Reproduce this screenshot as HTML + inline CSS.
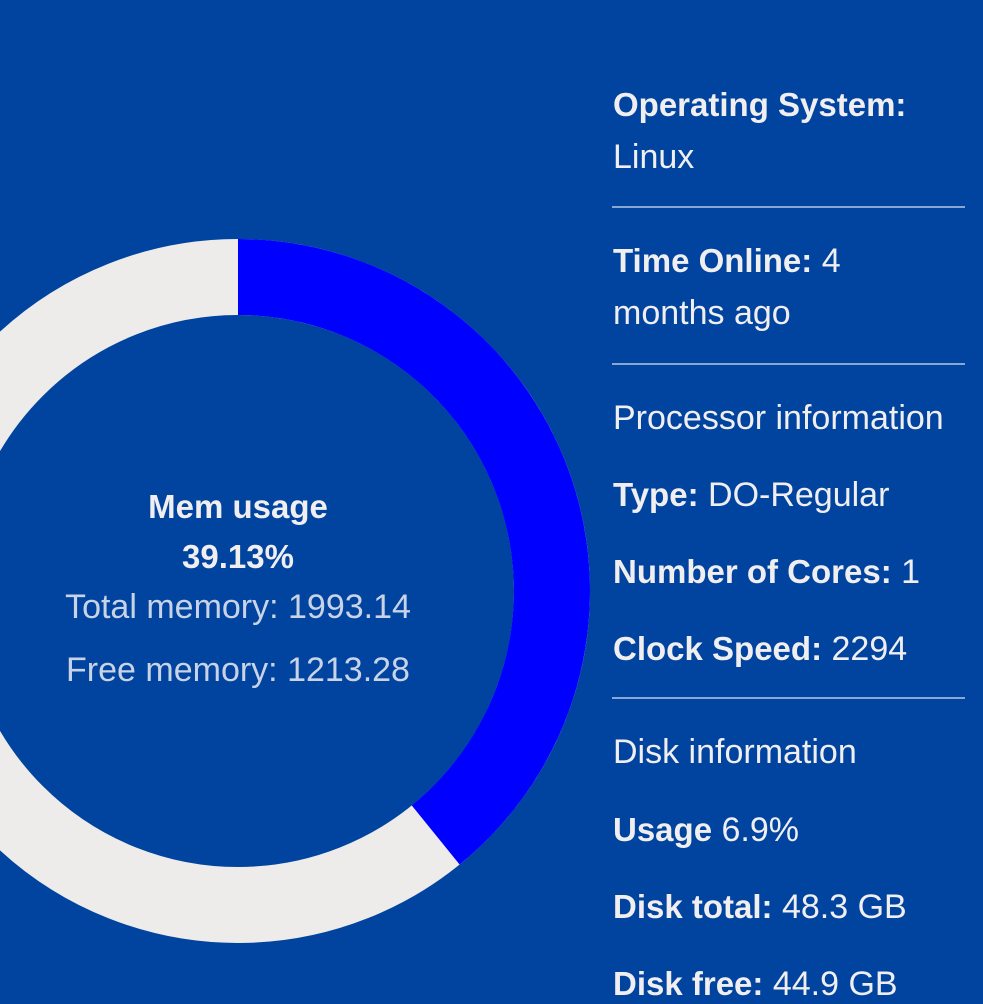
<!DOCTYPE html>
<html><head><style>
html,body{margin:0;padding:0;}
body{width:983px;height:983px;overflow:hidden;background:#0044a0;font-family:"Liberation Sans","DejaVu Sans",sans-serif;color:#f0eeee;position:relative;}
.l{position:absolute;left:613px;font-size:34px;line-height:40px;white-space:nowrap;}
.l b{font-weight:bold;font-size:33px;}
.hr{position:absolute;left:612px;width:353px;height:2px;background:#8aa6d4;}
.c{position:absolute;left:38px;width:400px;text-align:center;font-size:34px;line-height:40px;white-space:nowrap;}
.c b{font-size:33px;}
.dim{color:#c9d3e6;}
</style></head><body>
<svg width="983" height="983" style="position:absolute;left:0;top:0">
<circle cx="238" cy="591" r="314" fill="none" stroke="#eeecea" stroke-width="76"/>
<path d="M238 239 A352 352 0 0 1 459.6 864.5 L411.7 805.4 A276 276 0 0 0 238 315 Z" fill="#0000ff"/>
</svg>
<div class="c" style="top:487px"><b>Mem usage</b></div>
<div class="c" style="top:537px"><b>39.13%</b></div>
<div class="c dim" style="top:587px">Total memory: 1993.14</div>
<div class="c dim" style="top:650px">Free memory: 1213.28</div>

<div class="l" style="top:85px"><b>Operating System:</b></div>
<div class="l" style="top:137px">Linux</div>
<div class="hr" style="top:206px"></div>
<div class="l" style="top:241px"><b>Time Online:</b> 4</div>
<div class="l" style="top:293px">months ago</div>
<div class="hr" style="top:363px"></div>
<div class="l" style="top:398px">Processor information</div>
<div class="l" style="top:475px"><b>Type:</b> DO-Regular</div>
<div class="l" style="top:552px"><b>Number of Cores:</b> 1</div>
<div class="l" style="top:629px"><b>Clock Speed:</b> 2294</div>
<div class="hr" style="top:697px"></div>
<div class="l" style="top:732px">Disk information</div>
<div class="l" style="top:810px"><b>Usage</b> 6.9%</div>
<div class="l" style="top:887px"><b>Disk total:</b> 48.3 GB</div>
<div class="l" style="top:964px"><b>Disk free:</b> 44.9 GB</div>
</body></html>
